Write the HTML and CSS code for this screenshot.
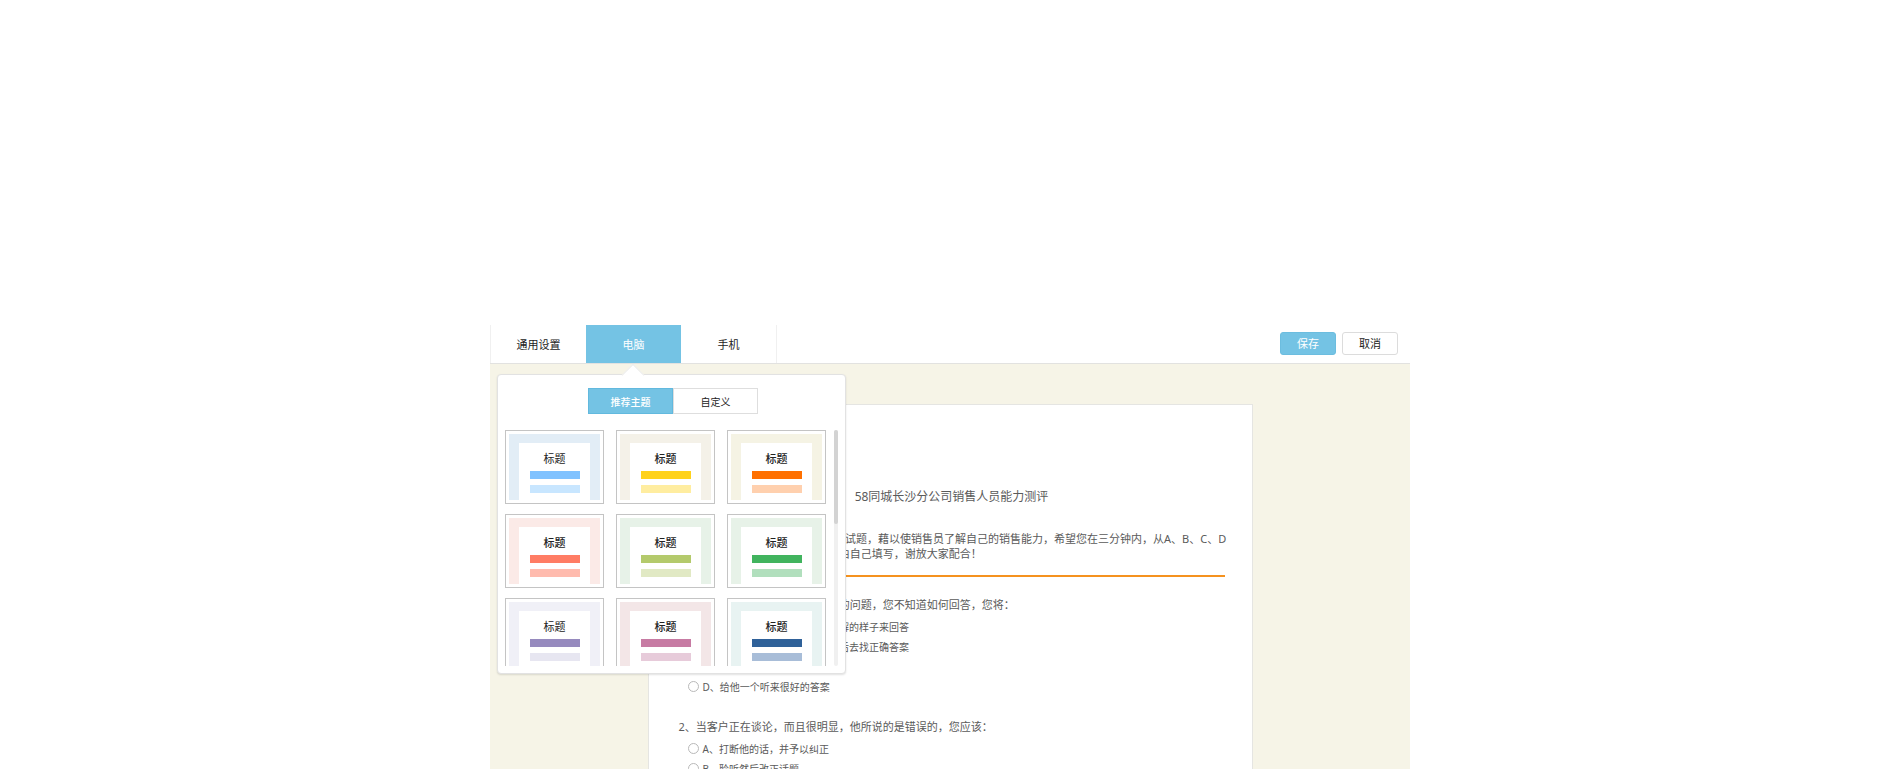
FILE: index.html
```html
<!DOCTYPE html>
<html lang="zh-CN">
<head>
<meta charset="utf-8">
<title>问卷外观设置</title>
<link rel="stylesheet" href="styles.css">
</head>
<body>
<div class="app">
  <header class="topbar">
    <nav class="tabs">
      <button type="button" class="tab">通用设置</button>
      <button type="button" class="tab tab-active">电脑</button>
      <button type="button" class="tab">手机</button>
    </nav>
    <div class="actions">
      <button type="button" class="btn btn-primary">保存</button>
      <button type="button" class="btn">取消</button>
    </div>
  </header>

  <main class="stage">
    <section class="theme-panel">
      <div class="switch">
        <button type="button" class="switch-item switch-active">推荐主题</button>
        <button type="button" class="switch-item">自定义</button>
      </div>
      <div class="theme-scroll">
        <div class="themes">
          <button type="button" class="theme sky"><span class="sheet"><span class="name">标题</span><span class="bar"></span><span class="bar bar-light"></span></span></button>
          <button type="button" class="theme yellow"><span class="sheet"><span class="name strong">标题</span><span class="bar"></span><span class="bar bar-light"></span></span></button>
          <button type="button" class="theme orange"><span class="sheet"><span class="name strong">标题</span><span class="bar"></span><span class="bar bar-light"></span></span></button>
          <button type="button" class="theme coral"><span class="sheet"><span class="name strong">标题</span><span class="bar"></span><span class="bar bar-light"></span></span></button>
          <button type="button" class="theme olive"><span class="sheet"><span class="name strong">标题</span><span class="bar"></span><span class="bar bar-light"></span></span></button>
          <button type="button" class="theme green"><span class="sheet"><span class="name strong">标题</span><span class="bar"></span><span class="bar bar-light"></span></span></button>
          <button type="button" class="theme violet"><span class="sheet"><span class="name">标题</span><span class="bar"></span><span class="bar bar-light"></span></span></button>
          <button type="button" class="theme pink"><span class="sheet"><span class="name strong">标题</span><span class="bar"></span><span class="bar bar-light"></span></span></button>
          <button type="button" class="theme navy"><span class="sheet"><span class="name strong">标题</span><span class="bar"></span><span class="bar bar-light"></span></span></button>
        </div>
        <div class="track"><div class="thumb"></div></div>
      </div>
    </section>

    <article class="paper">
      <h1 class="title">58同城长沙分公司销售人员能力测评</h1>
      <p class="intro">本卷为10道有关销售能力的自我测试题，藉以使销售员了解自己的销售能力，希望您在三分钟内，从A、B、C、D<br>4个选项中选出最符合您的一项，由自己填写，谢放大家配合！</p>
      <fieldset class="question">
        <legend>1、当客户询问一个您从未遇到过的问题，您不知道如何回答，您将：</legend>
        <label class="option"><input type="radio" name="q1">A、用一种让客户觉得您非常了解的样子来回答</label>
        <label class="option"><input type="radio" name="q1">B、先告诉客户稍等一会儿，然后去找正确答案</label>
        <label class="option"><input type="radio" name="q1">C、承认自己不了解</label>
        <label class="option"><input type="radio" name="q1">D、给他一个听来很好的答案</label>
      </fieldset>
      <fieldset class="question">
        <legend>2、当客户正在谈论，而且很明显，他所说的是错误的，您应该：</legend>
        <label class="option"><input type="radio" name="q2">A、打断他的话，并予以纠正</label>
        <label class="option"><input type="radio" name="q2">B、聆听然后改正话题</label>
      </fieldset>
    </article>
  </main>
</div>
</body>
</html>
```
FILE: styles.css
```css
* { box-sizing: border-box; }

body {
  display: flex;
  justify-content: center;
  height: 100vh;
  margin: 0;
  padding-top: 325px;
  overflow: hidden;
  background: #fff;
  color: #5a5a5a;
  font-family: "Noto Sans", "Noto Sans CJK SC", sans-serif;
  font-size: 11px;
}

button {
  padding: 0;
  border: 0;
  background: none;
  color: #222;
  font: inherit;
  cursor: pointer;
}

.app {
  display: flex;
  flex-direction: column;
  width: 100%;
  max-width: 920px;
}

.topbar {
  display: flex;
  flex: none;
  justify-content: space-between;
  align-items: center;
  border-bottom: 1px solid #e2e2e0;
}

.tabs {
  display: flex;
  border-left: 1px solid #f0f0f0;
  border-right: 1px solid #f0f0f0;
}

.tab {
  width: 95px;
  height: 38px;
}

.tab-active {
  background: #74c3e4;
  color: #fff;
}

.actions {
  display: flex;
  gap: 6px;
  padding: 0 12px 2px 0;
}

.btn {
  width: 56px;
  height: 23px;
  border: 1px solid #dcdcdc;
  border-radius: 3px;
  background: #fff;
}

.btn-primary {
  border-color: #6cbddf;
  background: #74c3e4;
  color: #fff;
}

.stage {
  position: relative;
  flex: 1;
  min-height: 0;
  padding-top: 40px;
  overflow: hidden;
  background: #f6f4e7;
}

/* Theme picker floating over the preview */
.theme-panel {
  position: absolute;
  z-index: 1;
  top: 10px;
  left: 7px;
  width: 349px;
  padding: 13px 7px 7px;
  border: 1px solid #e2e2e2;
  border-radius: 4px;
  background: #fff;
  box-shadow: 0 1px 2px rgba(0, 0, 0, 0.12);
}

.theme-panel::before {
  content: "";
  position: absolute;
  top: -8px;
  left: 127px;
  width: 15px;
  height: 15px;
  background: #fff;
  border: solid #ececea;
  border-width: 1px 0 0 1px;
  transform: rotate(45deg);
}

.switch {
  position: relative;
  display: flex;
  width: 170px;
  margin: 0 0 16px 83px;
  font-size: 10px;
}

.switch-item {
  flex: 1;
  height: 26px;
  border: 1px solid #dedede;
}

.switch-active {
  border-color: #62b9de;
  background: #74c3e4;
  color: #fff;
  font-weight: 500;
}

.theme-scroll {
  display: flex;
  justify-content: space-between;
  height: 236px;
  overflow: hidden;
}

.themes {
  display: grid;
  grid-template-columns: repeat(3, 99px);
  grid-auto-rows: 74px;
  gap: 10px 12px;
}

.theme {
  padding: 3px;
  border: 1px solid #c4c4c4;
  background: #fff;
}

.sheet {
  display: flex;
  flex-direction: column;
  align-items: center;
  height: 66px;
  padding: 8px 10px 0;
  border: solid var(--frame);
  border-width: 9px 10px 0;
  background: #fff;
}

.name {
  margin-bottom: 4px;
  line-height: 16px;
}

.strong { font-weight: 500; }

.bar {
  flex: none;
  width: 50px;
  height: 8px;
  margin-bottom: 6px;
  background: var(--main);
}

.bar-light {
  margin-bottom: 0;
  background: var(--light);
}

.sky    { --frame: #e2edf6; --main: #80c2ff; --light: #c8e6ff; }
.yellow { --frame: #f4f1e8; --main: #ffd21c; --light: #ffeda0; }
.orange { --frame: #f5f3e4; --main: #ff7000; --light: #ffd0ae; }
.coral  { --frame: #fbeae7; --main: #ff7c64; --light: #ffbbae; }
.olive  { --frame: #e7f2e8; --main: #b4ca6c; --light: #e1e9c4; }
.green  { --frame: #e7f2e8; --main: #41b45e; --light: #b1dfbd; }
.violet { --frame: #f0f0f7; --main: #968abe; --light: #e7e6f1; }
.pink   { --frame: #f3e6e7; --main: #c77ba3; --light: #e7cbda; }
.navy   { --frame: #e8f3f2; --main: #2f6199; --light: #a8bdd8; }

.track {
  width: 4px;
  border-radius: 2px;
  background: #f0f0f0;
}

.thumb {
  height: 94px;
  border-radius: 2px;
  background: #d3d3d3;
}

.paper {
  width: 605px;
  max-width: 100%;
  min-height: 100%;
  margin: 0 auto;
  padding: 80px 27px 20px 30px;
  border: 1px solid #e5e5e2;
  background: #fff;
}

.title {
  margin: 0 0 22px;
  font-size: 12px;
  font-weight: 400;
  line-height: 24px;
  text-align: center;
}

.intro {
  margin: 0 0 20px;
  padding-bottom: 14px;
  border-bottom: 2px solid #f5921f;
  line-height: 15px;
  white-space: nowrap;
}

.question {
  min-width: 0;
  margin: 0 0 23px;
  padding: 0;
  border: 0;
}

.question legend {
  margin-bottom: 3px;
  padding: 0;
  line-height: 16px;
}

.option {
  display: flex;
  align-items: center;
  gap: 4px;
  height: 20px;
  padding-left: 9px;
  font-size: 10px;
}

.option input {
  width: 11px;
  height: 11px;
  margin: 0;
  appearance: none;
  border: 1px solid #b9b9b9;
  border-radius: 50%;
  background: #fff;
}
```
